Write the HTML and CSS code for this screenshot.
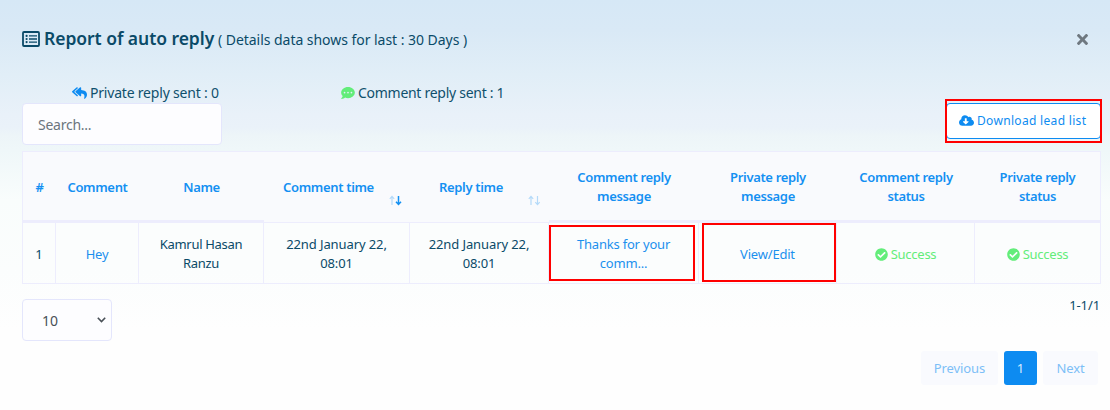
FILE: index.html
```html
<!DOCTYPE html>
<html lang="en">
<head>
<meta charset="utf-8">
<title>Report of auto reply</title>
<link rel="stylesheet" href="styles.css">
</head>
<body>
<svg class="defs" width="0" height="0">
  <symbol id="check" viewBox="0 0 512 512"><path d="M504 256c0 136.967-111.033 248-248 248S8 392.967 8 256 119.033 8 256 8s248 111.033 248 248zM227.314 387.314l184-184c6.248-6.248 6.248-16.379 0-22.627l-22.627-22.627c-6.248-6.249-16.379-6.249-22.628 0L216 308.118l-70.059-70.059c-6.248-6.248-16.379-6.248-22.628 0l-22.627 22.627c-6.248 6.248-6.248 16.379 0 22.627l104 104c6.249 6.249 16.379 6.249 22.628.001z"/></symbol>
</svg>
<main class="modal">
  <header class="head">
    <h1 class="title">
      <svg class="i-list" viewBox="0 0 18 16"><rect x="1" y="1" width="16" height="14" rx="1" fill="none" stroke="currentColor" stroke-width="1.8"/><g fill="currentColor"><circle cx="4.6" cy="4.9" r="1.1"/><circle cx="4.6" cy="8" r="1.1"/><circle cx="4.6" cy="11.1" r="1.1"/><path d="M7 4.2h8v1.4H7zM7 7.3h8v1.4H7zM7 10.4h8v1.4H7z"/></g></svg>
      <span class="title-main">Report of auto reply</span>
      <small class="title-sub">( Details data shows for last : 30 Days )</small>
    </h1>
    <svg class="close" viewBox="0 80 352 352"><path fill="currentColor" d="M242.72 256l100.07-100.07c12.28-12.28 12.28-32.19 0-44.48l-22.24-22.24c-12.28-12.28-32.19-12.28-44.48 0L176 189.28 75.93 89.21c-12.28-12.28-32.19-12.28-44.48 0L9.21 111.45c-12.28 12.28-12.28 32.19 0 44.48L109.28 256 9.21 356.07c-12.28 12.28-12.28 32.19 0 44.48l22.24 22.24c12.28 12.28 32.2 12.28 44.48 0L176 322.72l100.07 100.07c12.28 12.28 32.2 12.28 44.48 0l22.24-22.24c12.28-12.28 12.28-32.19 0-44.48L242.72 256z"/></svg>
  </header>
  <div class="stats">
    <div class="stat stat-private"><svg class="i-reply" viewBox="0 32 576 448"><path fill="currentColor" d="M136.309 189.836L312.313 37.851C327.72 24.546 352 35.348 352 56.015v82.763c129.182 10.231 224 52.212 224 183.548 0 61.441-39.582 122.309-83.333 154.132-13.653 9.931-33.111-2.533-28.077-18.631 38.512-123.162-3.922-169.482-112.59-182.015v84.175c0 20.701-24.3 31.453-39.687 18.164L136.309 226.164c-11.071-9.561-11.086-26.753 0-36.328zM8.309 226.164l176.004 152C199.7 391.5 224 380.7 224 360v-15.8L115.4 250.4C101 239 96 224 96 208s7-32 19.4-42.4L224 71.8V56C224 35.3 199.7 24.5 184.3 37.85L8.3 189.84c-11.1 9.6-11.1 26.8 0 36.3z"/></svg><span>Private reply sent : 0</span></div>
    <div class="stat stat-comment"><svg class="i-dots" viewBox="0 32 512 448"><path fill="currentColor" fill-rule="evenodd" d="M256 32C114.6 32 0 125.1 0 240c0 49.6 21.4 95 57 130.7C44.5 421.1 2.7 466 2.2 466.5c-2.2 2.3-2.8 5.7-1.5 8.7S4.8 480 8 480c66.3 0 116-31.8 140.6-51.4 32.7 12.3 69 19.4 107.4 19.4 141.4 0 256-93.1 256-208S397.4 32 256 32zM128 272a32 32 0 1 1 0-64 32 32 0 0 1 0 64zm128 0a32 32 0 1 1 0-64 32 32 0 0 1 0 64zm128 0a32 32 0 1 1 0-64 32 32 0 0 1 0 64z"/></svg><span>Comment reply sent : 1</span></div>
  </div>
  <div class="toolbar">
    <input class="search" type="text" placeholder="Search...">
    <div class="download">
      <svg class="i-cloud" viewBox="0 32 640 448"><path fill="currentColor" d="M537.6 226.6c4.1-10.7 6.4-22.4 6.4-34.6 0-53-43-96-96-96-19.7 0-38.1 6-53.3 16.2C367 64.2 315.3 32 256 32c-88.4 0-160 71.6-160 160 0 2.7.1 5.4.2 8.1C40.2 219.8 0 273.2 0 336c0 79.5 64.5 144 144 144h368c70.7 0 128-57.3 128-128 0-61.9-44-113.6-102.4-125.4zm-132.9 88.7L299.3 420.7c-6.2 6.2-16.4 6.2-22.6 0L171.3 315.3c-10.1-10.1-2.9-27.3 11.3-27.3H248V176c0-8.8 7.2-16 16-16h48c8.8 0 16 7.2 16 16v112h65.4c14.2 0 21.4 17.2 11.3 27.3z"/></svg><span>Download lead list</span>
      <i class="mark mark-download"></i>
    </div>
  </div>
  <div class="grid">
    <div class="th thick">#</div>
    <div class="th thick">Comment</div>
    <div class="th thick">Name</div>
    <div class="th sortable">Comment time<svg class="sort" viewBox="0 0 13 11"><path class="dim" d="M3 10V1.5M.8 3.8L3 1.3l2.2 2.5"/><path class="on" d="M9.5 1v8M7 6.8l2.5 2.7L12 6.8"/></svg></div>
    <div class="th sortable">Reply time<svg class="sort" viewBox="0 0 13 11"><path class="dim" d="M3 10V1.5M.8 3.8L3 1.3l2.2 2.5"/><path class="dim" d="M9.5 1v8.5M7.3 7.2l2.2 2.5 2.2-2.5"/></svg></div>
    <div class="th thick two">Comment reply<br>message</div>
    <div class="th thick two">Private reply<br>message</div>
    <div class="th thick two">Comment reply<br>status</div>
    <div class="th thick two">Private reply<br>status</div>
    <div class="td one">1</div>
    <div class="td one link">Hey</div>
    <div class="td">Kamrul Hasan<br>Ranzu</div>
    <div class="td">22nd January 22,<br>08:01</div>
    <div class="td">22nd January 22,<br>08:01</div>
    <div class="td link">Thanks for your<br>comm...<i class="mark mark-comment"></i></div>
    <div class="td one link">View/Edit<i class="mark mark-private"></i></div>
    <div class="td one ok"><span><svg class="i-check"><use href="#check"/></svg>Success</span></div>
    <div class="td one ok"><span><svg class="i-check"><use href="#check"/></svg>Success</span></div>
  </div>
  <footer class="foot">
    <div class="select"><span>10</span><svg class="chev" viewBox="0 0 9 6"><path d="M.8 .8l3.7 3.7L8.2 .8" fill="none" stroke="currentColor" stroke-width="1.6"/></svg></div>
    <div class="paging">
      <div class="count">1-1/1</div>
      <nav class="pages"><span class="page prev">Previous</span><span class="page current">1</span><span class="page next">Next</span></nav>
    </div>
  </footer>
</main>
</body>
</html>
```
FILE: styles.css
```css
* { box-sizing: border-box; }
body { margin: 0; font-family: "Noto Sans", "Open Sans", sans-serif; color: #0a4a68; }
.defs { display: block; position: absolute; }
.modal {
  height: 410px; padding: 27px 9px 0 22px; overflow: hidden;
  background: linear-gradient(#d6e8f6 0, #d9e9f6 30px, #e1eef7 75px, #e9f1f9 115px, #eaf2f9 128px, #edf5f8 135px, #eff7f9 150px, #f9fdfc 200px, #fbfdfd 270px, #fefefe 330px);
}
.head { display: flex; justify-content: space-between; height: 24px; align-items: center; }
.title { display: flex; align-items: baseline; margin: 0; font-weight: 600; font-size: 18px; line-height: 24px; white-space: nowrap; }
.i-list { width: 18px; height: 16px; margin-right: 4px; align-self: center; margin-bottom: 1px; }
.title-main { width: 170px; font-size: 17.5px; letter-spacing: -.05px; }
.title-sub { margin-left: 4px; font-size: 14px; font-weight: 400; letter-spacing: -.04px; }
.close { width: 11px; height: 11px; margin: 0 13px 0 0; color: #6f7880; }
.stats { display: flex; height: 20px; margin-top: 32px; padding-left: 50px; font-size: 14px; line-height: 20px; white-space: nowrap; }
.stat { display: flex; align-items: center; letter-spacing: -.2px; color: #0f506d; }
.stat-private { width: 269px; }
.stat-comment { letter-spacing: -.28px; }
.i-reply { width: 15px; height: 12px; margin-right: 3px; color: #0d8bf1; }
.i-dots { width: 14px; height: 12px; margin-right: 3px; color: #63ed7a; }
.toolbar { display: flex; justify-content: space-between; height: 48px; }
.search { width: 200px; height: 42px; padding: 0 15px; border: 1px solid #e4e6fc; border-radius: 4px; background: #fdfdff; font: 14px "Noto Sans", sans-serif; letter-spacing: -.25px; color: #495057; }
.search::placeholder { color: #6c757d; opacity: 1; }
.download { position: relative; display: flex; align-items: center; width: 155px; height: 36px; padding: 0 0 1px 12px; border: 1px solid #0d8bf1; border-radius: 4px; background: #fff; color: #0d8bf1; font-size: 12px; letter-spacing: .32px; white-space: nowrap; }
.i-cloud { width: 15px; height: 11px; margin-right: 3px; }
.mark { position: absolute; border: 2px solid #f00; pointer-events: none; }
.mark-download { left: -2px; top: -5px; width: 157px; height: 44px; }
.grid { display: grid; grid-template-columns: 33px 83px 125px 146px 139px 150px 138px 138px 126px; grid-template-rows: 71px 61px; width: 1079px; border: 1px solid #ededfd; border-right: 0; border-bottom: 0; font-size: 13px; line-height: 19px; text-align: center; white-space: nowrap; }
.th, .td { position: relative; display: flex; align-items: center; justify-content: center; }
.th { background: #f9fafd; color: #1490f2; font-weight: 600; border-bottom: 1px solid #ededfd; letter-spacing: -.34px; padding-top: 3px; }
.thick { border-bottom-width: 3px; }
.two { padding-top: 1px; }
.sortable { padding: 1px 17px 0 0; }
.th:nth-child(9) { border-right: 1px solid #ededfd; }
.td { background: rgba(252, 254, 253, .6); border-right: 1px solid #ededfd; border-bottom: 1px solid #ededfd; letter-spacing: -.1px; padding-top: 1px; }
.one { padding-top: 3px; }
.td:nth-child(12) { letter-spacing: -.3px; }
.link { color: #1b90ee; letter-spacing: -.2px; }
.ok { color: #63ed7a; letter-spacing: -.25px; }
.ok span { display: flex; align-items: center; }
.i-check { width: 13px; height: 13px; margin-right: 3px; fill: currentColor; }
.sort { position: absolute; right: 8px; bottom: 16px; width: 13px; height: 11px; }
.sort path { fill: none; stroke: #1490f2; stroke-width: 1.5; }
.sort .dim { stroke: #b5daf9; stroke-width: 1.2; }
.mark-comment { left: 0; top: 2px; width: 146px; height: 56px; }
.mark-private { left: 3px; top: 0; width: 134px; height: 59px; }
.foot { display: flex; justify-content: space-between; margin-top: 15px; }
.select { display: flex; align-items: center; justify-content: space-between; width: 90px; height: 42px; padding: 0 5px 0 19px; border: 1px solid #e4e6fc; border-radius: 4px; background: #fdfdff; color: #495057; font-size: 14px; }
.chev { width: 9px; height: 6px; }
.paging { display: flex; flex-direction: column; align-items: flex-end; padding-right: 1px; font-size: 13px; }
.count { height: 52px; line-height: 13px; letter-spacing: -.1px; }
.pages { display: flex; gap: 6px; margin-right: 2px; }
.page { display: flex; align-items: center; justify-content: center; height: 34px; border-radius: 3px; background: #f9fafe; color: #7dbff7; letter-spacing: -.1px; }
.prev { width: 77px; }
.current { width: 33px; background: #0d8bf1; color: #d9edff; }
.next { width: 55px; }
```
